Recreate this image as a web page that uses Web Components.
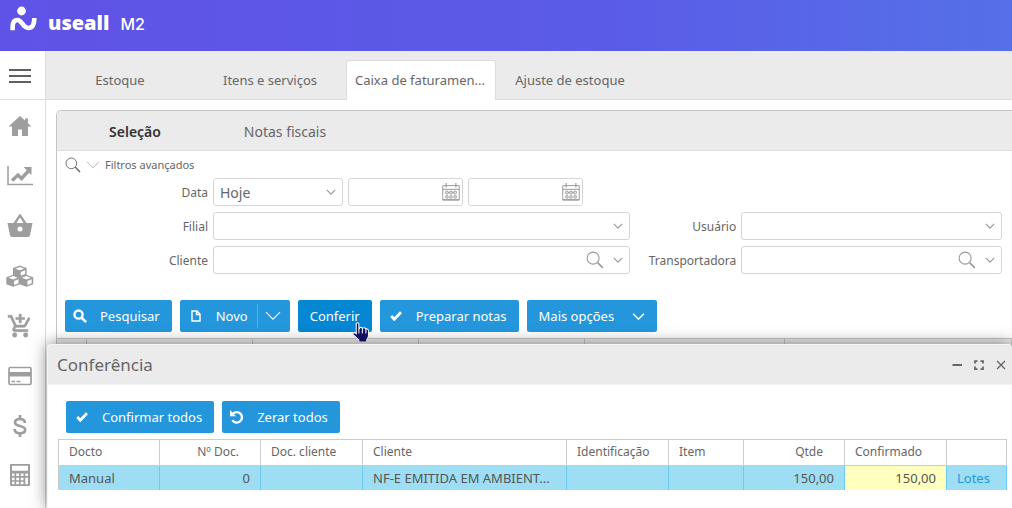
<!DOCTYPE html>
<html lang="pt-BR">
<head>
<meta charset="utf-8">
<meta name="viewport" content="width=device-width, initial-scale=1">
<title>Useall M2 - Caixa de faturamento</title>
<style>
  html, body { height: 100%; }
  body {
    margin: 0;
    font: 13px/20px "Noto Sans", "Open Sans", sans-serif;
    color: #666;
    background: #fff;
  }
</style>
</head>
<body>
<app-shell>
  <app-brand slot="header"></app-brand>
  <app-sidebar slot="sidebar"></app-sidebar>
  <page-tabs slot="tabs"></page-tabs>
  <billing-panel></billing-panel>
  <check-dialog slot="dialog"></check-dialog>
</app-shell>

<script>
const ICONS = {
  menu: '<path d="M0 2h22M0 8h22M0 14h22" transform="translate(1 4)" stroke="currentColor" stroke-width="2"/>',
  home: '<path fill="currentColor" d="M12 2 .5 12.500h3.500V22h6v-6.500h4V22h6v-9.500h3.500l-3.500-3.200V4.500h-3v2z"/>',
  chart: '<path fill="none" stroke="currentColor" stroke-width="1.500" d="M0 2v18.500h25"/><path fill="none" stroke="currentColor" stroke-width="3.400" d="M4 16.500l6-5.500 3.500 3.500 7-7.500"/><path fill="currentColor" d="M15.500 3H23.500v8z"/>',
  basket: '<path fill="currentColor" fill-rule="evenodd" d="M18.500 9 13 .8a1.200 1.200 0 0 0-2 0L5.500 9H-.5l2.500 12.500Q2.600 23 4.500 23h15q1.900 0 2.500-1.500L24.500 9zM12 3.500 15.600 9H8.400zM12 12.500a2.500 2.500 0 1 1 0 5 2.500 2.500 0 0 1 0-5z"/>',
  cubes: '<g transform="translate(-1.500 1.500) scale(1.020 .87)"><g fill="currentColor"><path d="M13 0l6.700 3v8l-6.700 3-6.700-3V3z"/><path d="M6.500 10.500l6.700 3v8l-6.700 3-6.700-3v-8z"/><path d="M19.500 10.500l6.700 3v8l-6.700 3-6.700-3v-8z"/></g><g fill="#fff"><path d="M13 1.600l4.400 2-4.400 2-4.400-2zM14 7.400l4.200-2v4.500L14 11.700z"/><path d="M6.500 12.100l4.400 2-4.400 2-4.400-2zM7.500 17.900l4.200-2v4.500l-4.200 2z"/><path d="M19.500 12.100l4.400 2-4.400 2-4.400-2zM20.500 17.900l4.200-2v4.500l-4.200 2z"/></g></g>',
  cart: '<path fill="currentColor" stroke="currentColor" stroke-width=".5" transform="translate(-1 -1) scale(1.100)" d="M11 9h2V6h3V4h-3V1h-2v3H8v2h3v3zM7 18a2 2 0 1 0 0 4 2 2 0 0 0 0-4zm10 0a2 2 0 1 0 0 4 2 2 0 0 0 0-4zM7.200 14.700l.9-1.700h7.400c.8 0 1.400-.4 1.800-1l3.800-7L19.400 4l-3.900 7h-7L4.300 2H1v2h2l3.600 7.600L5.200 14c-.7 1.300.3 3 1.800 3h12v-2H7.400c-.1 0-.2-.1-.2-.3z"/>',
  card: '<rect x="1" y="3.500" width="22" height="17" rx="1.500" fill="none" stroke="currentColor" stroke-width="1.700"/><path fill="currentColor" d="M1 8h22v4.500H1z"/><path stroke="currentColor" stroke-width="1.300" d="M3.500 17.500H7m1.500 0h4"/>',
  dollar: '<path fill="none" stroke="currentColor" stroke-width="2.700" d="M12 1v4m0 14v4M17 9c-.2-2.600-2.200-4-5-4s-5 1.400-5 3.500c0 4.700 10.200 2.400 10.200 7.300 0 2.200-2.200 3.500-5.200 3.500-3.100 0-5.300-1.400-5.500-4.300"/>',
  calc: '<path fill="currentColor" fill-rule="evenodd" d="M3 1h18q1 0 1 1v20q0 1-1 1H3q-1 0-1-1V2q0-1 1-1zM4 2.800v5h16v-5zM4 10.500v2.500h2.500v-2.500zm4.200 0v2.500h2.800v-2.500zm4.500 0v2.500h2.800v-2.500zm4.600 0v2.500H20v-2.500zM4 14.700v2.500h2.500v-2.500zm4.200 0v2.500h2.800v-2.500zm4.500 0v2.500h2.800v-2.500zm4.600 0v6.500H20v-6.500zM4 18.800v2.500h2.500v-2.500zm4.200 0v2.500h2.800v-2.500zm4.500 0v2.500h2.800v-2.500z"/>',
  lens: '<g fill="none" stroke="currentColor"><circle cx="9.500" cy="9.500" r="8" stroke-width="1.400"/><path d="M15.500 15.500l7 7" stroke-width="2.200"/></g>',
  find: '<g fill="none" stroke="currentColor"><circle cx="9.500" cy="9.500" r="7" stroke-width="4"/><path d="M14.500 14.500l8 8" stroke-width="4.500"/></g>',
  down: '<path fill="none" stroke="currentColor" stroke-width="2.800" d="M2 7l10 10 10-10"/>',
  wide: '<path fill="none" stroke="currentColor" stroke-width="1.800" d="M0 5.500l12 12 12-12"/>',
  page: '<path fill="none" stroke="currentColor" stroke-width="2.800" d="M4 2h10l6 6v14H4zM13 2v7h7"/>',
  check: '<path fill="none" stroke="currentColor" stroke-width="5.500" d="M2.500 12l6 6.500L22 4.500"/>',
  undo: '<path fill="none" stroke="currentColor" stroke-width="4" d="M4.500 7a9 9 0 1 1-.5 10.500"/><path fill="currentColor" d="M0 0v10.500h10.500z"/>',
  calendar: '<g fill="none" stroke="currentColor"><path stroke-width="1.300" d="M1 3.500h22v19H1zM1 8.500h22"/><path stroke-width="1.500" d="M5.500 0v6M18.500 0v6"/><path stroke-width="1.500" d="M1 22.500h22"/><path stroke-width="1.200" d="M5 11h3v3.500H5zm5.500 0h3v3.500h-3zm5.500 0h3v3.500h-3zM5 17h3v3H5zm5.500 0h3v3h-3zm5.500 0h3v3h-3zM8 12.700h2.500m3 0H16"/></g>',
  minus: '<path stroke="currentColor" stroke-width="4" d="M3 12h19"/>',
  expand: '<path fill="none" stroke="currentColor" stroke-width="3.500" d="M9 4H4v5m11-5h5v5M9 20H4v-5m11 5h5v-5"/>',
  close: '<path stroke="currentColor" stroke-width="2.600" d="M4 4l16 16M20 4L4 20"/>',
  hand: '<path fill="#10106a" stroke="#fff" stroke-width="1.200" d="M6 1.500q2-1.500 3 .5v6.500l1-2q2-1 3 .8l1-.5q2-.5 2.700 1l1-.2q2 .2 2.300 2V15q0 3-2 5v3H9v-2.500L2.500 14.500Q1.500 12 4 12l2 1.500zM9 8v5m4-5v5m4-4.500V13"/>'
};

const define = (name, markup, setup) => {
  const template = document.createElement('template');
  template.innerHTML = markup;
  customElements.define(name, class extends HTMLElement {
    constructor() {
      super();
      this.attachShadow({ mode: 'open' });
    }
    connectedCallback() {
      if (this.shadowRoot.childNodes.length) return;
      this.shadowRoot.append(template.content.cloneNode(true));
      if (setup) setup(this, this.shadowRoot);
    }
  });
};

/* Icon: drawn on a 24-unit grid, sized by --size */
define('ui-icon', `
  <style>
    :host { display: inline-flex; flex: none; width: var(--size, 24px); height: var(--size, 24px); }
    svg { width: 100%; height: 100%; overflow: visible; }
  </style>
  <svg viewBox="0 0 24 24" aria-hidden="true"></svg>`,
  (host, root) => { root.querySelector('svg').innerHTML = ICONS[host.getAttribute('name')]; });

/* Page frame */
define('app-shell', `
  <style>
    :host { display: flex; flex-direction: column; min-height: 100vh; }
    .body { flex: 1; display: flex; position: relative; }
    main { flex: 1; min-width: 0; display: flex; flex-direction: column; }
    .content { flex: 1; display: flex; padding: 10px 0 0 10px; }
  </style>
  <slot name="header"></slot>
  <div class="body">
    <slot name="sidebar"></slot>
    <main>
      <slot name="tabs"></slot>
      <div class="content"><slot></slot></div>
    </main>
    <slot name="dialog"></slot>
  </div>`);

define('app-brand', `
  <style>
    :host { display: block; flex: none; background: linear-gradient(90deg, #6052e6, #5a5ce7 60%, #5570e8); color: #fff; }
    header { display: flex; align-items: flex-start; height: 51px; padding: 6px 10px; box-sizing: border-box; }
    svg { width: 27px; height: 26px; margin-right: 11px; }
    b { font: 800 20px/34px "Open Sans", sans-serif; }
    span { font: 500 16px/36px Inter, sans-serif; margin-left: 11px; }
  </style>
  <header>
    <svg viewBox="0 0 27 26" aria-hidden="true">
      <circle cx="11.500" cy="5" r="4.400" fill="#fff"/>
      <path d="M2.600 24.300V21Q2.600 14 7.500 14C12.500 14 12 22 18.500 22Q24.300 22 24.300 12" fill="none" stroke="#fff" stroke-width="4.600"/>
    </svg>
    <b>useall</b><span>M2</span>
  </header>`);

define('app-sidebar', `
  <style>
    :host { display: block; flex: none; width: 46px; box-sizing: border-box; border-right: 1px solid #ddd; background: #fff; }
    nav { display: flex; flex-direction: column; }
    button, a { display: flex; align-items: center; justify-content: center; height: 50px; padding: 2px 6px 0 0; border: 0; box-sizing: border-box; background: none; color: #9e9e9e; }
    button { height: 49px; border-bottom: 1px solid #ddd; color: #616161; }
    a:last-child { height: 48px; }
  </style>
  <nav aria-label="Principal"><button aria-label="Menu"><ui-icon name="menu"></ui-icon></button></nav>`,
  (host, root) => {
    const items = [['home', 'Início'], ['chart', 'Indicadores'], ['basket', 'Compras'], ['cubes', 'Estoque'],
      ['cart', 'Vendas'], ['card', 'Pagamentos'], ['dollar', 'Financeiro'], ['calc', 'Contabilidade']];
    for (const [icon, label] of items) {
      const a = document.createElement('a');
      a.href = '#' + icon;
      a.setAttribute('aria-label', label);
      a.innerHTML = `<ui-icon name="${icon}"></ui-icon>`;
      root.querySelector('nav').append(a);
    }
  });

define('page-tabs', `
  <style>
    :host { display: block; flex: none; }
    nav { display: flex; align-items: flex-end; height: 49px; box-sizing: border-box; background: #ebebeb; border-bottom: 1px solid #ddd; }
    button { width: 150px; height: 39px; padding: 0 2px 1px 0; border: 1px solid transparent; border-bottom: 0; background: none; font: inherit; color: inherit; white-space: nowrap; }
    button[aria-selected=true] { height: 40px; margin-bottom: -1px; border-color: #ddd; border-radius: 3px 3px 0 0; background: #fff; }
  </style>
  <nav role="tablist">
    <button role="tab">Estoque</button>
    <button role="tab">Itens e serviços</button>
    <button role="tab" aria-selected="true">Caixa de faturamen...</button>
    <button role="tab">Ajuste de estoque</button>
  </nav>`);

/* Labelled form field: kind is select, lookup or date */
define('ui-field', `
  <style>
    :host { display: flex; align-items: center; min-width: 0; }
    label { flex: none; width: var(--label, 101px); margin-right: 5px; padding-top: 2px; text-align: right; font-size: 12px; line-height: 20px; }
    .box { position: relative; flex: 1; min-width: 0; display: flex; align-items: center; height: 28px; box-sizing: border-box; border: 1px solid #d5d5d5; border-radius: 3px; background: #fff; }
    select, input { flex: 1; min-width: 0; width: 100%; height: 26px; padding: 1px 6px 0; border: 0; background: none; appearance: none; font: inherit; font-size: 14px; color: #666; }
    button { display: flex; padding: 0; border: 0; background: none; color: #999; }
    .chevron { --size: 10px; position: absolute; right: 6px; top: 8px; display: flex; color: #999; pointer-events: none; }
    .lookup { --size: 18px; margin-right: 25px; color: #999; }
    .date { --size: 18px; margin-right: 2px; color: #999; }
  </style>
  <label for="control"></label>
  <div class="box"></div>`,
  (host, root) => {
    const kind = host.getAttribute('kind');
    const label = root.querySelector('label');
    const box = root.querySelector('.box');
    const text = host.getAttribute('label');
    if (text) label.textContent = text; else label.remove();
    if (kind === 'select') {
      box.innerHTML = `<select id="control"><option>${host.getAttribute('value') || ''}</option></select>
        <span class="chevron"><ui-icon name="down"></ui-icon></span>`;
    } else if (kind === 'lookup') {
      box.innerHTML = `<input id="control" type="text"><button class="lookup" aria-label="Buscar"><ui-icon name="lens"></ui-icon></button>
        <span class="chevron"><ui-icon name="down"></ui-icon></span>`;
    } else {
      box.innerHTML = `<input id="control" type="text"><button class="date" aria-label="Abrir calendário"><ui-icon name="calendar"></ui-icon></button>`;
    }
    if (!text) box.firstChild.setAttribute('aria-label', host.getAttribute('hint'));
  });

define('ui-button', `
  <style>
    :host { display: inline-flex; }
    button { display: flex; align-items: center; height: 32px; padding: 0 12px 0 8px; border: 0; border-radius: 2px; background: #2497dc; color: #fff; font: inherit; white-space: nowrap; cursor: pointer; }
    ui-icon { --size: 14px; margin-right: 13px; }
    ui-icon[name=check], ui-icon[name=page] { --size: 12px; margin-right: 14px; margin-left: 2px; }
    :host([plain]) button { padding: 0 12px; }
    :host([active]) button { background: #0587d4; }
    :host([menu]) ui-icon[name=down] { --size: 13px; margin: 0 0 0 18px; }
    :host([split]) .split { display: flex; align-items: center; height: 24px; margin-left: 9px; padding-left: 8px; border-left: 1px solid #57b0e6; }
    :host([split]) .split ui-icon { --size: 14px; margin: 0; }
    :host([split]) button { padding-right: 10px; }
  </style>
  <button type="button"><slot></slot></button>`,
  (host, root) => {
    const button = root.querySelector('button');
    const icon = host.getAttribute('icon');
    if (icon) button.insertAdjacentHTML('afterbegin', `<ui-icon name="${icon}"></ui-icon>`);
    if (host.hasAttribute('menu')) button.insertAdjacentHTML('beforeend', '<ui-icon name="down"></ui-icon>');
    if (host.hasAttribute('split')) button.insertAdjacentHTML('beforeend', '<span class="split"><ui-icon name="wide"></ui-icon></span>');
  });

define('billing-panel', `
  <style>
    :host { display: block; flex: 1; min-width: 0; border: 1px solid #c4c4c4; border-width: 1px 0 0 1px; border-radius: 5px 0 0 0; overflow: hidden; }
    nav { display: flex; height: 39px; padding-left: 2px; background: #ebebeb; border-bottom: 1px solid #ddd; }
    nav button { width: 150px; padding: 2px 0 0 2px; border: 0; background: none; font: inherit; font-size: 14px; color: #666; }
    nav button[aria-selected=true] { font-weight: 600; color: #333; }
    .advanced { display: flex; align-items: center; gap: 6px; height: 27px; padding: 1px 8px 0; border: 0; background: none; font: inherit; font-size: 11px; color: #666; }
    .advanced ui-icon:first-child { --size: 16px; }
    .advanced ui-icon + ui-icon { --size: 12px; color: #aaa; }
    form { display: grid; grid-template-columns: calc(148px + (100% - 259px) * 8 / 13) 1fr; gap: 6px 5px; padding: 0 10px 0 8px; }
    .wide { --label: 143px; }
    .period { grid-column: 1 / -1; display: flex; gap: 5px; }
    .period ui-field { width: 115px; }
    .period ui-field:first-child { width: 278px; }
    .actions { display: flex; gap: 8px; padding: 26px 8px 6px; }
    .pointed { position: relative; display: flex; }
    .cursor { --size: 21px; position: absolute; right: 0; bottom: -11px; }
    table { width: 100%; border-collapse: collapse; table-layout: fixed; }
    th { height: 24px; padding: 0; border: 1px solid #c4c4c4; border-left: 0; background: #ececec; }
    .mark { width: 29px; } .col { width: 166px; } .long { width: 200px; }
  </style>
  <nav role="tablist">
    <button role="tab" aria-selected="true">Seleção</button>
    <button role="tab">Notas fiscais</button>
  </nav>
  <button class="advanced" type="button"><ui-icon name="lens"></ui-icon><ui-icon name="wide"></ui-icon>Filtros avançados</button>
  <form>
    <div class="period">
      <ui-field class="wide" kind="select" label="Data" value="Hoje"></ui-field>
      <ui-field kind="date" hint="Data inicial"></ui-field>
      <ui-field kind="date" hint="Data final"></ui-field>
    </div>
    <ui-field class="wide" kind="select" label="Filial"></ui-field>
    <ui-field kind="select" label="Usuário"></ui-field>
    <ui-field class="wide" kind="lookup" label="Cliente"></ui-field>
    <ui-field kind="lookup" label="Transportadora"></ui-field>
  </form>
  <div class="actions">
    <ui-button icon="find">Pesquisar</ui-button>
    <ui-button icon="page" split>Novo</ui-button>
    <span class="pointed"><ui-button plain active>Conferir</ui-button><ui-icon class="cursor" name="hand"></ui-icon></span>
    <ui-button icon="check">Preparar notas</ui-button>
    <ui-button plain menu>Mais opções</ui-button>
  </div>
  <table aria-label="Notas">
    <colgroup><col class="mark"><col class="col"><col class="col"><col class="col"><col class="long"><col></colgroup>
    <thead><tr><th></th><th></th><th></th><th></th><th></th><th></th></tr></thead>
  </table>`);

define('check-dialog', `
  <style>
    :host { display: block; position: absolute; z-index: 1; left: 47px; right: 0; top: 293px; bottom: 0; border: 1px solid #f4f4f4; border-width: 1px 0 0 1px; border-radius: 4px 4px 0 0; background: #fff; box-shadow: 0 0 16px rgba(0, 0, 0, .5); box-sizing: border-box; clip-path: inset(-30px 0 0 -30px); }
    header { display: flex; align-items: center; height: 39px; padding: 0 5px 0 9px; border-bottom: 1px solid #f2f2f2; background: #ebebeb; border-radius: 4px 4px 0 0; }
    h2 { flex: 1; margin: 0; font-size: 17px; line-height: 24px; font-weight: 400; color: #666; }
    header button { display: flex; margin-left: 10px; padding: 0; border: 0; background: none; color: #666; --size: 12px; }
    .actions { display: flex; gap: 8px; padding: 16px 18px 6px; }
    .grid { padding: 0 5px 0 10px; }
    table { width: 100%; border-collapse: collapse; table-layout: fixed; }
    th, td { height: 24px; padding: 0 10px; text-align: left; font-weight: 400; line-height: 20px; white-space: nowrap; overflow: hidden; text-overflow: ellipsis; box-sizing: border-box; }
    th { height: 26px; padding-bottom: 2px; border: 1px solid #ccc; font-size: 12px; }
    td { border-right: 1px solid #6ccbee; background: #9edef4; color: #555; }
    td:first-child { border-left: 1px solid #ccc; }
    .num { text-align: right; }
    th.num { padding-right: 21px; }
    td.edit { background: #ffffc0; }
    a { color: #2497dc; text-decoration: none; }
    .a { width: 101px; } .b { width: 102px; } .d { width: 75px; } .e { width: 60px; }
  </style>
  <header>
    <h2>Conferência</h2>
    <button aria-label="Minimizar"><ui-icon name="minus"></ui-icon></button>
    <button aria-label="Maximizar"><ui-icon name="expand"></ui-icon></button>
    <button aria-label="Fechar"><ui-icon name="close"></ui-icon></button>
  </header>
  <div class="actions">
    <ui-button icon="check">Confirmar todos</ui-button>
    <ui-button icon="undo">Zerar todos</ui-button>
  </div>
  <div class="grid">
    <table>
      <colgroup><col class="a"><col class="a"><col class="b"><col><col class="b"><col class="d"><col class="a"><col class="b"><col class="e"></colgroup>
      <thead><tr><th>Docto</th><th class="num">Nº Doc.</th><th>Doc. cliente</th><th>Cliente</th><th>Identificação</th><th>Item</th><th class="num">Qtde</th><th>Confirmado</th><th></th></tr></thead>
      <tbody><tr><td>Manual</td><td class="num">0</td><td></td><td>NF-E EMITIDA EM AMBIENT...</td><td></td><td></td><td class="num">150,00</td><td class="num edit">150,00</td><td><a href="#lotes">Lotes</a></td></tr></tbody>
    </table>
  </div>`);
</script>
</body>
</html>
